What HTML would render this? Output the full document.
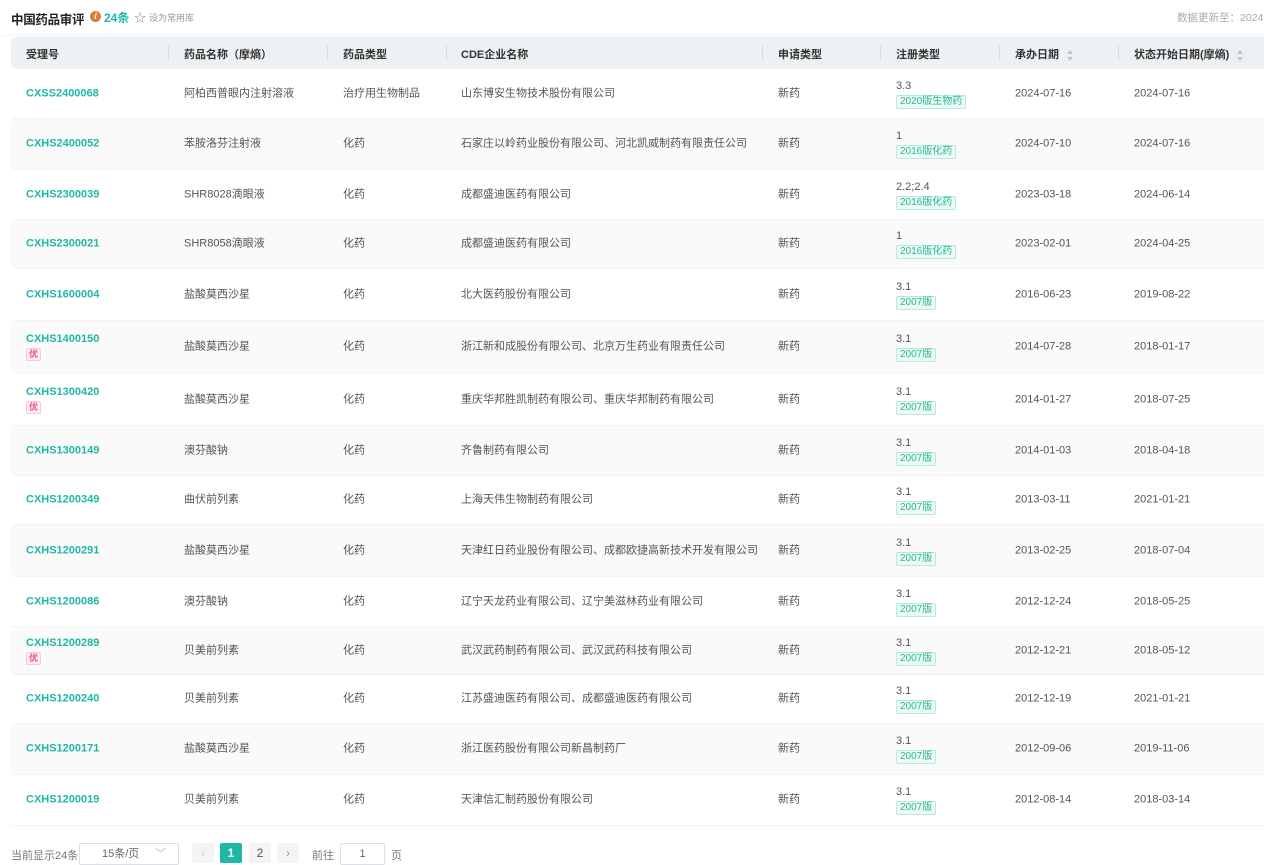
<!DOCTYPE html>
<html><head><meta charset="utf-8"><style>
*{margin:0;padding:0;box-sizing:border-box}
body{width:1264px;height:858px;overflow:hidden;background:#fff;font-family:"Liberation Sans","Noto Sans CJK SC",sans-serif;color:#555;font-size:11px;position:relative}
.a{position:absolute;white-space:nowrap}
.top{position:absolute;left:0;top:0;width:1264px;height:34px;background:#fff;box-shadow:0 2px 4px rgba(0,0,0,.04)}
.hdr{position:absolute;left:11px;top:37px;width:1253px;height:32px;background:#eef1f3;border-radius:5px 0 0 5px}
.hdr span{position:absolute;top:9px;font-weight:bold;color:#333;font-size:11px}
.sep{position:absolute;top:8px;width:1px;height:16px;background:#d8dcdf}
.row{position:absolute;left:11px;width:1253px;border-bottom:1px solid #f3f3f3}
.row.s{background:#fafafa;border-radius:5px 0 0 5px}
.row .a{top:50%;transform:translateY(-50%);line-height:15px}
.id{color:#1fb8a6;font-weight:bold;font-size:11px}
.tag{display:inline-block;border:1px solid #b7eadb;background:#eefaf6;color:#23b893;font-size:10px;line-height:12px;padding:0 3px;border-radius:2px}
.yo{display:inline-block;border:1px solid #fcc7dc;background:#fff0f5;color:#ef4c8c;font-size:9px;line-height:11px;padding:0 2px;border-radius:2px;margin-top:1px}
.sort{display:inline-block;margin-left:8px;vertical-align:middle;width:7px;height:11px;position:relative}
.sort:before,.sort:after{content:"";position:absolute;left:0;border-left:3.5px solid transparent;border-right:3.5px solid transparent}
.sort:before{top:0;border-bottom:4px solid #c0c4c8}
.sort:after{bottom:0;border-top:4px solid #c0c4c8}
.pg{position:absolute;top:843px;height:20px;border-radius:2px;font-size:12px;text-align:center;line-height:20px}
</style></head><body>
<div class="top">
<div class="a" style="left:11px;top:9px;font-size:12.5px;font-weight:bold;color:#222;letter-spacing:-0.3px">中国药品审评</div>
<div class="a" style="left:90px;top:11px;width:11px;height:11px;border-radius:50%;background:#e07a3c;color:#fff;font-size:9px;font-weight:bold;text-align:center;line-height:11px;font-style:italic">i</div>
<div class="a" style="left:104px;top:9px;font-size:12px;font-weight:bold;color:#1fb8a6">24条</div>
<div class="a" style="left:134px;top:9px;color:#888;font-size:12px">☆</div>
<div class="a" style="left:149px;top:11px;color:#999;font-size:9px">设为常用库</div>
<div class="a" style="left:1177px;top:10px;color:#aaa;font-size:10.5px">数据更新至：2024</div>
</div>
<div class="hdr">
<span style="left:15px">受理号</span><div class="sep" style="left:157px"></div>
<span style="left:173px">药品名称（摩熵）</span><div class="sep" style="left:316px"></div>
<span style="left:332px">药品类型</span><div class="sep" style="left:435px"></div>
<span style="left:450px">CDE企业名称</span><div class="sep" style="left:751px"></div>
<span style="left:767px">申请类型</span><div class="sep" style="left:869px"></div>
<span style="left:885px">注册类型</span><div class="sep" style="left:988px"></div>
<span style="left:1004px">承办日期<i class="sort"></i></span><div class="sep" style="left:1107px"></div>
<span style="left:1123px">状态开始日期(摩熵)<i class="sort"></i></span>
</div>

<div class="row" style="top:69px;height:50px"><div class="a id" style="left:15px">CXSS2400068</div><div class="a" style="left:173px">阿柏西普眼内注射溶液</div><div class="a" style="left:332px">治疗用生物制品</div><div class="a" style="left:450px">山东博安生物技术股份有限公司</div><div class="a" style="left:767px">新药</div><div class="a" style="left:885px">3.3<br><span class="tag">2020版生物药</span></div><div class="a" style="left:1004px">2024-07-16</div><div class="a" style="left:1123px">2024-07-16</div></div>
<div class="row s" style="top:119px;height:51px"><div class="a id" style="left:15px">CXHS2400052</div><div class="a" style="left:173px">苯胺洛芬注射液</div><div class="a" style="left:332px">化药</div><div class="a" style="left:450px">石家庄以岭药业股份有限公司、河北凯威制药有限责任公司</div><div class="a" style="left:767px">新药</div><div class="a" style="left:885px">1<br><span class="tag">2016版化药</span></div><div class="a" style="left:1004px">2024-07-10</div><div class="a" style="left:1123px">2024-07-16</div></div>
<div class="row" style="top:170px;height:50px"><div class="a id" style="left:15px">CXHS2300039</div><div class="a" style="left:173px">SHR8028滴眼液</div><div class="a" style="left:332px">化药</div><div class="a" style="left:450px">成都盛迪医药有限公司</div><div class="a" style="left:767px">新药</div><div class="a" style="left:885px">2.2;2.4<br><span class="tag">2016版化药</span></div><div class="a" style="left:1004px">2023-03-18</div><div class="a" style="left:1123px">2024-06-14</div></div>
<div class="row s" style="top:220px;height:49px"><div class="a id" style="left:15px">CXHS2300021</div><div class="a" style="left:173px">SHR8058滴眼液</div><div class="a" style="left:332px">化药</div><div class="a" style="left:450px">成都盛迪医药有限公司</div><div class="a" style="left:767px">新药</div><div class="a" style="left:885px">1<br><span class="tag">2016版化药</span></div><div class="a" style="left:1004px">2023-02-01</div><div class="a" style="left:1123px">2024-04-25</div></div>
<div class="row" style="top:269px;height:52px"><div class="a id" style="left:15px">CXHS1600004</div><div class="a" style="left:173px">盐酸莫西沙星</div><div class="a" style="left:332px">化药</div><div class="a" style="left:450px">北大医药股份有限公司</div><div class="a" style="left:767px">新药</div><div class="a" style="left:885px">3.1<br><span class="tag">2007版</span></div><div class="a" style="left:1004px">2016-06-23</div><div class="a" style="left:1123px">2019-08-22</div></div>
<div class="row s" style="top:321px;height:53px"><div class="a id" style="left:15px">CXHS1400150<br><span class="yo">优</span></div><div class="a" style="left:173px">盐酸莫西沙星</div><div class="a" style="left:332px">化药</div><div class="a" style="left:450px">浙江新和成股份有限公司、北京万生药业有限责任公司</div><div class="a" style="left:767px">新药</div><div class="a" style="left:885px">3.1<br><span class="tag">2007版</span></div><div class="a" style="left:1004px">2014-07-28</div><div class="a" style="left:1123px">2018-01-17</div></div>
<div class="row" style="top:374px;height:52px"><div class="a id" style="left:15px">CXHS1300420<br><span class="yo">优</span></div><div class="a" style="left:173px">盐酸莫西沙星</div><div class="a" style="left:332px">化药</div><div class="a" style="left:450px">重庆华邦胜凯制药有限公司、重庆华邦制药有限公司</div><div class="a" style="left:767px">新药</div><div class="a" style="left:885px">3.1<br><span class="tag">2007版</span></div><div class="a" style="left:1004px">2014-01-27</div><div class="a" style="left:1123px">2018-07-25</div></div>
<div class="row s" style="top:426px;height:50px"><div class="a id" style="left:15px">CXHS1300149</div><div class="a" style="left:173px">澳芬酸钠</div><div class="a" style="left:332px">化药</div><div class="a" style="left:450px">齐鲁制药有限公司</div><div class="a" style="left:767px">新药</div><div class="a" style="left:885px">3.1<br><span class="tag">2007版</span></div><div class="a" style="left:1004px">2014-01-03</div><div class="a" style="left:1123px">2018-04-18</div></div>
<div class="row" style="top:476px;height:49px"><div class="a id" style="left:15px">CXHS1200349</div><div class="a" style="left:173px">曲伏前列素</div><div class="a" style="left:332px">化药</div><div class="a" style="left:450px">上海天伟生物制药有限公司</div><div class="a" style="left:767px">新药</div><div class="a" style="left:885px">3.1<br><span class="tag">2007版</span></div><div class="a" style="left:1004px">2013-03-11</div><div class="a" style="left:1123px">2021-01-21</div></div>
<div class="row s" style="top:525px;height:52px"><div class="a id" style="left:15px">CXHS1200291</div><div class="a" style="left:173px">盐酸莫西沙星</div><div class="a" style="left:332px">化药</div><div class="a" style="left:450px">天津红日药业股份有限公司、成都欧捷高新技术开发有限公司</div><div class="a" style="left:767px">新药</div><div class="a" style="left:885px">3.1<br><span class="tag">2007版</span></div><div class="a" style="left:1004px">2013-02-25</div><div class="a" style="left:1123px">2018-07-04</div></div>
<div class="row" style="top:577px;height:50px"><div class="a id" style="left:15px">CXHS1200086</div><div class="a" style="left:173px">澳芬酸钠</div><div class="a" style="left:332px">化药</div><div class="a" style="left:450px">辽宁天龙药业有限公司、辽宁美滋林药业有限公司</div><div class="a" style="left:767px">新药</div><div class="a" style="left:885px">3.1<br><span class="tag">2007版</span></div><div class="a" style="left:1004px">2012-12-24</div><div class="a" style="left:1123px">2018-05-25</div></div>
<div class="row s" style="top:627px;height:48px"><div class="a id" style="left:15px">CXHS1200289<br><span class="yo">优</span></div><div class="a" style="left:173px">贝美前列素</div><div class="a" style="left:332px">化药</div><div class="a" style="left:450px">武汉武药制药有限公司、武汉武药科技有限公司</div><div class="a" style="left:767px">新药</div><div class="a" style="left:885px">3.1<br><span class="tag">2007版</span></div><div class="a" style="left:1004px">2012-12-21</div><div class="a" style="left:1123px">2018-05-12</div></div>
<div class="row" style="top:675px;height:49px"><div class="a id" style="left:15px">CXHS1200240</div><div class="a" style="left:173px">贝美前列素</div><div class="a" style="left:332px">化药</div><div class="a" style="left:450px">江苏盛迪医药有限公司、成都盛迪医药有限公司</div><div class="a" style="left:767px">新药</div><div class="a" style="left:885px">3.1<br><span class="tag">2007版</span></div><div class="a" style="left:1004px">2012-12-19</div><div class="a" style="left:1123px">2021-01-21</div></div>
<div class="row s" style="top:724px;height:51px"><div class="a id" style="left:15px">CXHS1200171</div><div class="a" style="left:173px">盐酸莫西沙星</div><div class="a" style="left:332px">化药</div><div class="a" style="left:450px">浙江医药股份有限公司新昌制药厂</div><div class="a" style="left:767px">新药</div><div class="a" style="left:885px">3.1<br><span class="tag">2007版</span></div><div class="a" style="left:1004px">2012-09-06</div><div class="a" style="left:1123px">2019-11-06</div></div>
<div class="row" style="top:775px;height:51px"><div class="a id" style="left:15px">CXHS1200019</div><div class="a" style="left:173px">贝美前列素</div><div class="a" style="left:332px">化药</div><div class="a" style="left:450px">天津信汇制药股份有限公司</div><div class="a" style="left:767px">新药</div><div class="a" style="left:885px">3.1<br><span class="tag">2007版</span></div><div class="a" style="left:1004px">2012-08-14</div><div class="a" style="left:1123px">2018-03-14</div></div>

<div class="a" style="left:11px;top:847px;color:#777;font-size:11px">当前显示24条</div>
<div class="pg" style="left:79px;width:100px;border:1px solid #dcdfe6;color:#666;font-size:11px;text-align:left;padding-left:22px;height:22px">15条/页<span style="position:absolute;right:12px;color:#bbb">﹀</span></div>
<div class="pg" style="left:192px;width:22px;background:#f4f4f5;color:#ccc">‹</div>
<div class="pg" style="left:220px;width:22px;background:#1fb8a6;color:#fff;font-weight:bold">1</div>
<div class="pg" style="left:249px;width:22px;background:#f4f4f5;color:#555">2</div>
<div class="pg" style="left:277px;width:22px;background:#f4f4f5;color:#999">›</div>
<div class="a" style="left:312px;top:847px;color:#777">前往</div>
<div class="pg" style="left:340px;width:45px;border:1px solid #dcdfe6;color:#666;font-size:11px;height:22px">1</div>
<div class="a" style="left:391px;top:847px;color:#777">页</div>
</body></html>
